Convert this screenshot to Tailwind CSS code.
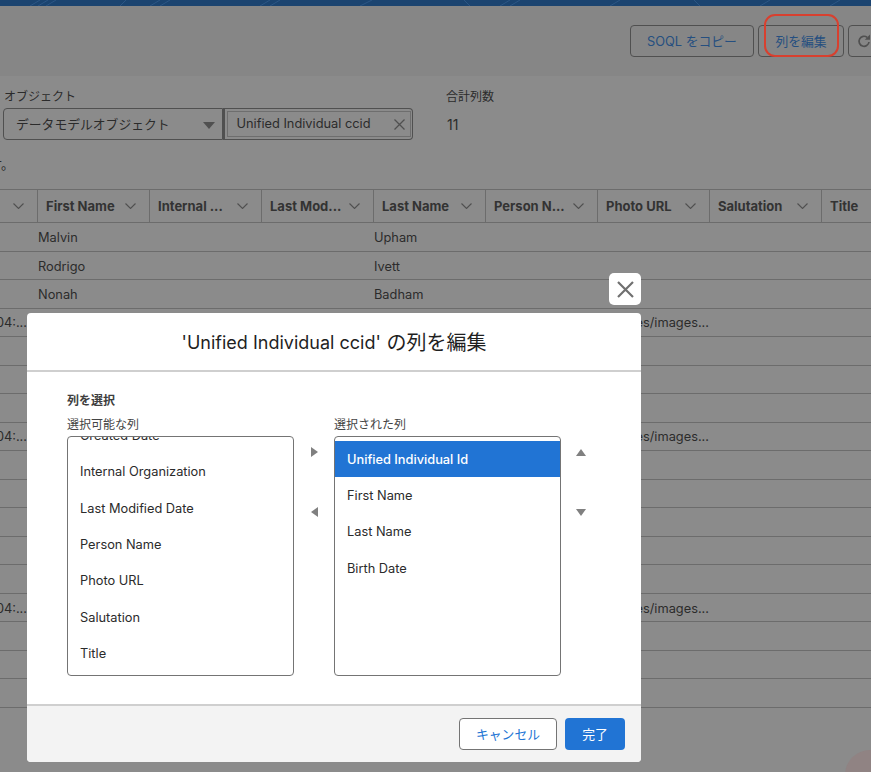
<!DOCTYPE html>
<html lang="ja">
<head>
<meta charset="utf-8">
<title>列を編集</title>
<script src="https://cdn.jsdelivr.net/npm/@tailwindcss/browser@4"></script>
</head>
<body class="m-0 h-[772px] w-[871px] overflow-hidden bg-[#8b8b8b] font-['Inter','Noto_Sans_CJK_JP',sans-serif] text-[12.8px] leading-none text-[#2b2b2b]">
<div class="relative h-[772px] w-[871px] overflow-hidden">

  <!-- top band -->
  <div class="h-[6px] overflow-hidden bg-[#1b4470]">
    <svg width="871" height="6" fill="none" stroke="#2c5684" stroke-width="1"><path d="M30 6 L40 0 M38 6 L48 0 M46 6 L56 0 M120 6 L126 0 M150 6 L160 0 M160 6 L170 0 M260 6 L270 0 M270 6 L280 0 M360 6 L372 0 M470 6 L464 0 M500 6 L510 0 M510 6 L520 0 M610 6 L620 0 M700 6 L694 0 M760 6 L770 0 M830 6 L840 0"/></svg>
  </div>

  <!-- action bar -->
  <div class="flex h-[70px] items-start gap-[4px] bg-[#868686] pt-[19px] pl-[630px] text-[#254f80]">
    <div class="flex h-[32px] w-[124px] shrink-0 items-center justify-center rounded-[4px] border border-[#505050] pt-[2px]">SOQL をコピー</div>
    <div class="flex h-[32px] w-[86px] shrink-0 items-center justify-center rounded-[4px] border border-[#505050] pt-[2px]">列を編集</div>
    <div class="flex h-[32px] w-[32px] shrink-0 items-center justify-center rounded-[4px] border border-[#505050]">
      <svg width="14" height="14" viewBox="0 0 14 14" fill="none" stroke="#505050" stroke-width="1.7"><path d="M12 8a5 5 0 1 1-1.8-4.6"/><path d="M13 .5v5.2H7.8z" fill="#505050" stroke="none"/></svg>
    </div>
  </div>

  <!-- filters -->
  <div class="flex h-[113px] flex-col">
    <div class="flex pt-[15px]">
      <div class="w-[446px] pl-[4px] text-[12px] leading-[12px] text-[#2b2b2b]">オブジェクト</div>
      <div class="text-[12px] leading-[12px] text-[#2b2b2b]">合計列数</div>
    </div>
    <div class="flex items-center pt-[5px]">
      <div class="ml-[3px] flex h-[32px] w-[220px] items-center justify-between rounded-l-[4px] border border-[#505050] pt-[2px] pr-[7px] pl-[12px]">
        <span>データモデルオブジェクト</span>
        <svg width="12" height="7" viewBox="0 0 12 7" fill="#505050"><path d="M0 0h12L6 7z"/></svg>
      </div>
      <div class="flex h-[32px] w-[190px] items-center justify-center rounded-r-[4px] border border-l-2 border-[#505050]">
        <div class="flex h-[26px] w-[184px] items-center justify-between border border-[#6e6e6e] pt-[1px] pr-[5px] pl-[9px]">
          <span>Unified Individual ccid</span>
          <svg width="11" height="11" viewBox="0 0 11 11" fill="none" stroke="#505050" stroke-width="1.3"><path d="M.5.5l10 10M10.5.5l-10 10"/></svg>
        </div>
      </div>
      <div class="ml-[34px] pt-[1px] text-[14px] text-[#2b2b2b]">11</div>
    </div>
    <div class="relative mt-[18px] h-[13px] w-[14px] overflow-hidden">
      <div class="absolute right-0 top-0 whitespace-nowrap text-[13px] leading-[13px]">ます。</div>
    </div>
  </div>

  <!-- table -->
  <div class="border-t border-[#6c6c6c]">
    <div class="grid h-[33px] grid-cols-[37px_repeat(8,112px)] items-center border-b border-[#6c6c6c] text-[13px] font-bold text-[#333]">
      <div class="flex h-full items-center justify-end pr-[13px]"><svg width="11" height="6" viewBox="0 0 11 6" fill="none" stroke="#505050" stroke-width="1.1"><path d="M.5.5l5 5 5-5"/></svg></div>
      <div class="flex h-full items-center justify-between border-l border-[#6c6c6c] pr-[13px] pl-[8px]"><span>First Name</span><svg width="11" height="6" viewBox="0 0 11 6" fill="none" stroke="#505050" stroke-width="1.1"><path d="M.5.5l5 5 5-5"/></svg></div>
      <div class="flex h-full items-center justify-between border-l border-[#6c6c6c] pr-[13px] pl-[8px]"><span>Internal ...</span><svg width="11" height="6" viewBox="0 0 11 6" fill="none" stroke="#505050" stroke-width="1.1"><path d="M.5.5l5 5 5-5"/></svg></div>
      <div class="flex h-full items-center justify-between border-l border-[#6c6c6c] pr-[13px] pl-[8px]"><span>Last Mod...</span><svg width="11" height="6" viewBox="0 0 11 6" fill="none" stroke="#505050" stroke-width="1.1"><path d="M.5.5l5 5 5-5"/></svg></div>
      <div class="flex h-full items-center justify-between border-l border-[#6c6c6c] pr-[13px] pl-[8px]"><span>Last Name</span><svg width="11" height="6" viewBox="0 0 11 6" fill="none" stroke="#505050" stroke-width="1.1"><path d="M.5.5l5 5 5-5"/></svg></div>
      <div class="flex h-full items-center justify-between border-l border-[#6c6c6c] pr-[13px] pl-[8px]"><span>Person N...</span><svg width="11" height="6" viewBox="0 0 11 6" fill="none" stroke="#505050" stroke-width="1.1"><path d="M.5.5l5 5 5-5"/></svg></div>
      <div class="flex h-full items-center justify-between border-l border-[#6c6c6c] pr-[13px] pl-[8px]"><span>Photo URL</span><svg width="11" height="6" viewBox="0 0 11 6" fill="none" stroke="#505050" stroke-width="1.1"><path d="M.5.5l5 5 5-5"/></svg></div>
      <div class="flex h-full items-center justify-between border-l border-[#6c6c6c] pr-[13px] pl-[8px]"><span>Salutation</span><svg width="11" height="6" viewBox="0 0 11 6" fill="none" stroke="#505050" stroke-width="1.1"><path d="M.5.5l5 5 5-5"/></svg></div>
      <div class="flex h-full items-center border-l border-[#6c6c6c] pl-[8px]"><span>Title</span></div>
    </div>

    <div class="grid h-[28.5px] grid-cols-[37px_repeat(8,112px)] items-center border-b border-[#6c6c6c] pt-[4px]"><div></div><div class="pl-[1px]">Malvin</div><div></div><div></div><div class="pl-[1px]">Upham</div></div>
    <div class="grid h-[28.5px] grid-cols-[37px_repeat(8,112px)] items-center border-b border-[#6c6c6c] pt-[4px]"><div></div><div class="pl-[1px]">Rodrigo</div><div></div><div></div><div class="pl-[1px]">Ivett</div></div>
    <div class="grid h-[28.5px] grid-cols-[37px_repeat(8,112px)] items-center border-b border-[#6c6c6c] pt-[4px]"><div></div><div class="pl-[1px]">Nonah</div><div></div><div></div><div class="pl-[1px]">Badham</div></div>

    <div class="grid h-[28.5px] grid-cols-[37px_repeat(8,112px)] items-center border-b border-[#6c6c6c] pt-[3px]"><div class="flex justify-end overflow-hidden whitespace-nowrap pr-[10px]">12:04:...</div><div></div><div></div><div></div><div></div><div></div><div class="flex justify-end overflow-hidden whitespace-nowrap">https://res/images...</div></div>
    <div class="h-[28.5px] border-b border-[#6c6c6c]"></div>
    <div class="h-[28.5px] border-b border-[#6c6c6c]"></div>
    <div class="h-[28.5px] border-b border-[#6c6c6c]"></div>

    <div class="grid h-[28.5px] grid-cols-[37px_repeat(8,112px)] items-center border-b border-[#6c6c6c] pt-[3px]"><div class="flex justify-end overflow-hidden whitespace-nowrap pr-[10px]">12:04:...</div><div></div><div></div><div></div><div></div><div></div><div class="flex justify-end overflow-hidden whitespace-nowrap">https://res/images...</div></div>
    <div class="h-[28.5px] border-b border-[#6c6c6c]"></div>
    <div class="h-[28.5px] border-b border-[#6c6c6c]"></div>
    <div class="h-[28.5px] border-b border-[#6c6c6c]"></div>
    <div class="h-[28.5px] border-b border-[#6c6c6c]"></div>
    <div class="h-[28.5px] border-b border-[#6c6c6c]"></div>

    <div class="grid h-[28.5px] grid-cols-[37px_repeat(8,112px)] items-center border-b border-[#6c6c6c] pt-[4px]"><div class="flex justify-end overflow-hidden whitespace-nowrap pr-[10px]">12:04:...</div><div></div><div></div><div></div><div></div><div></div><div class="flex justify-end overflow-hidden whitespace-nowrap">https://res/images...</div></div>
    <div class="h-[28.5px] border-b border-[#6c6c6c]"></div>
    <div class="h-[28.5px] border-b border-[#6c6c6c]"></div>
    <div class="h-[28.5px] border-b border-[#6c6c6c]"></div>
  </div>

  <!-- annotation -->
  <div class="absolute left-[764px] top-[14px] h-[43px] w-[75px] rounded-[11px] border-2 border-[#d8402f]"></div>
  <div class="absolute -right-[24px] -bottom-[28px] h-[50px] w-[50px] rounded-full bg-[#a06a6a]/25"></div>

  <!-- close -->
  <button class="absolute left-[609px] top-[273px] flex h-[32px] w-[32px] items-center justify-center rounded-[5px] bg-white">
    <svg width="17" height="17" viewBox="0 0 17 17" fill="none" stroke="#707070" stroke-width="2.2"><path d="M1 1l15 15M16 1L1 16"/></svg>
  </button>

  <!-- modal -->
  <div class="absolute left-[27px] top-[313px] flex h-[449px] w-[614px] flex-col overflow-hidden rounded-[4px] bg-white">
    <div class="flex h-[59px] shrink-0 items-center justify-center whitespace-pre border-b-2 border-[#cfcfcf] pt-[2px] text-[20px] text-[#1f1f1f]"><span class="text-[18px]">'Unified Individual ccid'</span> の列を編集</div>

    <div class="flex-1 pt-[23px] pl-[40px] text-[#2b2b2b]">
      <div class="text-[12px] leading-[12px] font-bold text-[#3e3e3e]">列を選択</div>
      <div class="mt-[12px] flex">
        <div class="w-[227px]">
          <div class="text-[12px] leading-[12px] text-[#444]">選択可能な列</div>
          <div class="relative mt-[5px] h-[240px] overflow-hidden rounded-[4px] border border-[#747474]">
            <div class="absolute -top-[19px] left-0 right-0">
              <div class="flex h-[36.4px] items-center pl-[12px]">Created Date</div>
              <div class="flex h-[36.4px] items-center pl-[12px]">Internal Organization</div>
              <div class="flex h-[36.4px] items-center pl-[12px]">Last Modified Date</div>
              <div class="flex h-[36.4px] items-center pl-[12px]">Person Name</div>
              <div class="flex h-[36.4px] items-center pl-[12px]">Photo URL</div>
              <div class="flex h-[36.4px] items-center pl-[12px]">Salutation</div>
              <div class="flex h-[36.4px] items-center pl-[12px]">Title</div>
            </div>
          </div>
        </div>

        <div class="flex w-[40px] flex-col items-center gap-[50px] pt-[28px]">
          <svg width="7" height="10" viewBox="0 0 7 10" fill="#808080"><path d="M0 0l7 5-7 5z"/></svg>
          <svg width="7" height="10" viewBox="0 0 7 10" fill="#808080"><path d="M7 0L0 5l7 5z"/></svg>
        </div>

        <div class="w-[227px]">
          <div class="text-[12px] leading-[12px] text-[#444]">選択された列</div>
          <div class="mt-[5px] h-[240px] overflow-hidden rounded-[4px] border border-[#747474] pt-[4px]">
            <div class="flex h-[36px] items-center bg-[#2174d4] pt-[2px] pl-[12px] font-medium text-white">Unified Individual Id</div>
            <div class="flex h-[36.4px] items-center pt-[2px] pl-[12px]">First Name</div>
            <div class="flex h-[36.4px] items-center pt-[2px] pl-[12px]">Last Name</div>
            <div class="flex h-[36.4px] items-center pt-[2px] pl-[12px]">Birth Date</div>
          </div>
        </div>

        <div class="flex w-[40px] flex-col items-center gap-[53px] pt-[30px]">
          <svg width="10" height="7" viewBox="0 0 10 7" fill="#808080"><path d="M5 0l5 7H0z"/></svg>
          <svg width="10" height="7" viewBox="0 0 10 7" fill="#808080"><path d="M0 0h10L5 7z"/></svg>
        </div>
      </div>
    </div>

    <div class="flex h-[58px] shrink-0 items-center justify-end gap-[8px] border-t-2 border-[#cfcfcf] bg-[#f3f3f3] pr-[16px]">
      <button class="flex h-[32px] w-[98px] items-center justify-center rounded-[4px] border border-[#747474] bg-white pt-[2px] text-[#2174d4]">キャンセル</button>
      <button class="flex h-[32px] w-[60px] items-center justify-center rounded-[4px] bg-[#2174d4] pt-[2px] text-white">完了</button>
    </div>
  </div>
</div>
</body>
</html>
